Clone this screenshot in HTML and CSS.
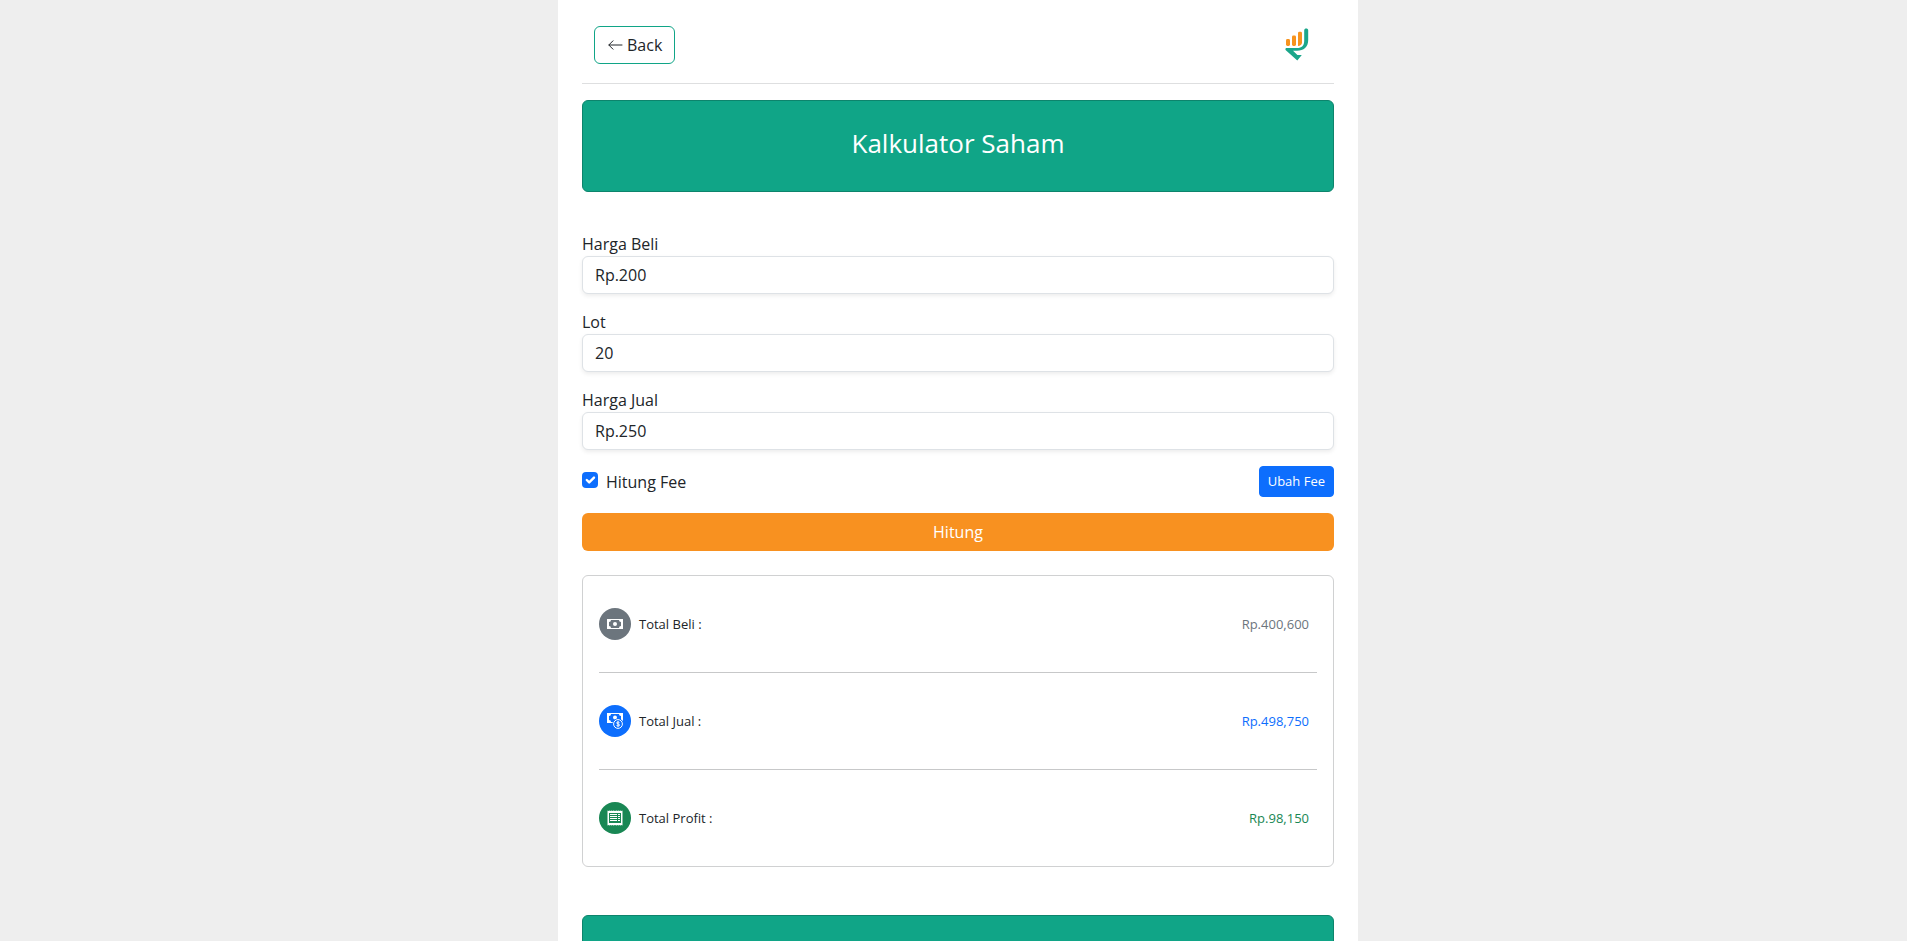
FILE: index.html
```html
<!DOCTYPE html>
<html lang="id">
<head>
<meta charset="utf-8">
<meta name="viewport" content="width=device-width, initial-scale=1">
<title>Kalkulator Saham</title>
<link rel="stylesheet" href="styles.css">
</head>
<body>
<main class="page">
  <header class="topbar">
    <a class="back" href="#">
      <svg class="back-icon" viewBox="0 0 16 16" aria-hidden="true"><path d="M15 8H2M6 3.8 1.8 8 6 12.2"/></svg>
      Back
    </a>
    <svg class="logo" viewBox="0 0 24 34" role="img" aria-label="Logo">
      <g class="logo-bars">
        <rect x="1" y="11" width="4" height="7" rx="1.4"/>
        <rect x="7" y="7.5" width="4" height="10.5" rx="1.4"/>
        <path d="M13 5.2a1.4 1.4 0 0 1 1.4-1.4h1.2A1.4 1.4 0 0 1 17 5.2V14.500c0 2-1.800 3.500-4 3.500z"/>
      </g>
      <path class="logo-hand" d="M19.200 2.200c0-2.400 4-2.400 4 0V12c0 7-4.500 10.800-11.200 10.800H8l4.400 4.200h4.400L12.300 32.500.8 22.300C0 21 .5 20 1.800 20H12c4.800 0 7.200-2.400 7.200-7z"/>
    </svg>
  </header>

  <section class="banner"><h1 class="banner-title">Kalkulator Saham</h1></section>

  <form class="calc">
    <div class="field">
      <label for="buy">Harga Beli</label>
      <input class="control" id="buy" type="text" value="Rp.200">
    </div>
    <div class="field">
      <label for="lot">Lot</label>
      <input class="control" id="lot" type="text" value="20">
    </div>
    <div class="field">
      <label for="sell">Harga Jual</label>
      <input class="control" id="sell" type="text" value="Rp.250">
    </div>
    <div class="fee-row">
      <div class="check">
        <input class="check-box" id="fee" type="checkbox" checked>
        <label for="fee">Hitung Fee</label>
      </div>
      <button class="fee-button" type="button">Ubah Fee</button>
    </div>
    <button class="submit" type="button">Hitung</button>
  </form>

  <section class="results">
    <div class="result">
      <span class="badge badge-buy">
        <svg class="badge-icon" viewBox="0 0 16 16" aria-hidden="true">
          <path fill-rule="evenodd" d="M0 3h16v10H0zM4 4A2 2 0 0 1 2 6v4a2 2 0 0 1 2 2h8a2 2 0 0 1 2-2V6a2 2 0 0 1-2-2z"/>
          <circle cx="8" cy="8" r="2"/>
        </svg>
      </span>
      <span class="result-name">Total Beli :</span>
      <span class="result-value value-buy">Rp.400,600</span>
    </div>
    <div class="result">
      <span class="badge badge-sell">
        <svg class="badge-icon" viewBox="0 0 16 16" aria-hidden="true">
          <path fill-rule="evenodd" d="M0 0h16v10H0zM4 1A2 2 0 0 1 2 3v4a2 2 0 0 1 2 2h8a2 2 0 0 1 2-2V3a2 2 0 0 1-2-2z"/>
          <circle cx="8" cy="4.500" r="2"/>
          <circle class="coin-gap" cx="11" cy="11" r="5.600"/>
          <circle class="coin-ring" cx="11" cy="11" r="4.400"/>
          <path class="coin-sign" d="M12.500 9.700c-.4-.9-2.900-1-2.900.2 0 1.300 3 .8 3 2.200 0 1.300-2.700 1.200-3.100.1M11 8.200v5.600"/>
        </svg>
      </span>
      <span class="result-name">Total Jual :</span>
      <span class="result-value value-sell">Rp.498,750</span>
    </div>
    <div class="result">
      <span class="badge badge-profit">
        <svg class="badge-icon" viewBox="0 0 16 16" aria-hidden="true">
          <path fill-rule="evenodd" d="M.5.400l1 .6 1-.6 1 .6 1-.6 1 .6 1-.6 1.500.6 1.500-.6 1 .6 1-.6 1 .6 1-.6 1 .6 1-.6v15.200l-1-.6-1 .6-1-.6-1 .6-1-.6-1 .6L8 15l-1.500.6-1-.6-1 .6-1-.6-1 .6-1-.6-1 .6zM2 3v10h12V3z"/>
          <path class="receipt-lines" d="M3 4.500h7M3 6.500h7M3 8.500h7M3 10.500h7M11 4.500h2M11 6.500h2M11 8.500h2M11 10.500h2"/>
        </svg>
      </span>
      <span class="result-name">Total Profit :</span>
      <span class="result-value value-profit">Rp.98,150</span>
    </div>
  </section>

  <section class="banner"></section>
</main>
</body>
</html>
```
FILE: styles.css
```css
* {
  box-sizing: border-box;
}

html {
  overflow: hidden;
}

body {
  margin: 0;
  padding-left: 9px;
  background: #eee;
  color: #212529;
  font: 16px/24px "Segoe UI", "Open Sans", "Noto Sans", sans-serif;
}

button,
input {
  font: inherit;
  color: inherit;
}

.page {
  max-width: 800px;
  min-height: 100vh;
  margin: 0 auto;
  padding: 0 24px;
  background: #fff;
}

.topbar {
  display: flex;
  align-items: center;
  justify-content: space-between;
  padding: 26px 25px 19px 12px;
  border-bottom: 1px solid #dedfe0;
  margin-bottom: 16px;
}

.back {
  display: flex;
  align-items: center;
  gap: 4px;
  padding: 6px 12px;
  border: 1px solid #10a587;
  border-radius: 6px;
  color: inherit;
  text-decoration: none;
}

.back-icon {
  width: 16px;
  height: 16px;
  fill: none;
  stroke: currentColor;
  stroke-width: 1;
  stroke-linecap: round;
  stroke-linejoin: round;
}

.logo {
  width: 24px;
  height: 34px;
}

.logo-bars {
  fill: #f7931e;
}

.logo-hand {
  fill: #1aa68a;
}

.banner {
  min-height: 92px;
  padding: 24px;
  border: 1px solid #0d846c;
  border-radius: 6px;
  background: #10a587;
  color: #fff;
  text-align: center;
}

.banner-title {
  margin: 0;
  font-size: 26px;
  font-weight: 400;
  line-height: 36px;
}

.calc {
  display: flex;
  flex-direction: column;
  gap: 16px;
  margin: 40px 0 24px;
}

.field {
  display: flex;
  flex-direction: column;
}

.control {
  width: 100%;
  height: 38px;
  padding: 6px 12px;
  border: 1px solid #dee2e6;
  border-radius: 6px;
  background: #fff;
  box-shadow: 0 2px 4px rgba(0, 0, 0, 0.075);
}

.fee-row,
.check,
.result {
  display: flex;
  align-items: center;
}

.fee-row {
  justify-content: space-between;
}

.check {
  gap: 8px;
}

.check-box {
  appearance: none;
  width: 16px;
  height: 16px;
  margin: 0 0 4px;
  border-radius: 4px;
  background: #0d6efd url("data:image/svg+xml,%3Csvg xmlns='http://www.w3.org/2000/svg' viewBox='0 0 20 20'%3E%3Cpath fill='none' stroke='%23fff' stroke-linecap='round' stroke-linejoin='round' stroke-width='3' d='m6 10 3 3 6-6'/%3E%3C/svg%3E");
}

.fee-button {
  padding: 4px 8px;
  border: 1px solid #0d6efd;
  border-radius: 4px;
  background: #0d6efd;
  color: #fff;
  font-size: 13px;
  line-height: 21px;
}

.submit {
  padding: 7px 12px;
  border: 0;
  border-radius: 6px;
  background: #f89120;
  color: #fff;
}

.results {
  margin-bottom: 48px;
  padding: 0 16px;
  border: 1px solid #d0d1d2;
  border-radius: 6px;
  font-size: 13px;
}

.result {
  gap: 8px;
  padding: 32px 8px 32px 0;
}

.result + .result {
  border-top: 1px solid #c7c8c9;
}

.badge {
  display: grid;
  place-items: center;
  width: 32px;
  height: 32px;
  border-radius: 50%;
}

.badge-buy {
  background: #6c757d;
}

.badge-sell {
  background: #0d6efd;
}

.badge-profit {
  background: #198754;
}

.badge-icon {
  width: 16px;
  height: 16px;
  fill: #fff;
}

.coin-gap {
  fill: #0d6efd;
}

.coin-ring,
.coin-sign,
.receipt-lines {
  fill: none;
  stroke: #fff;
  stroke-width: 1;
}

.result-value {
  margin-left: auto;
}

.value-buy {
  color: #6c757d;
}

.value-sell {
  color: #0d6efd;
}

.value-profit {
  color: #198754;
}
```
